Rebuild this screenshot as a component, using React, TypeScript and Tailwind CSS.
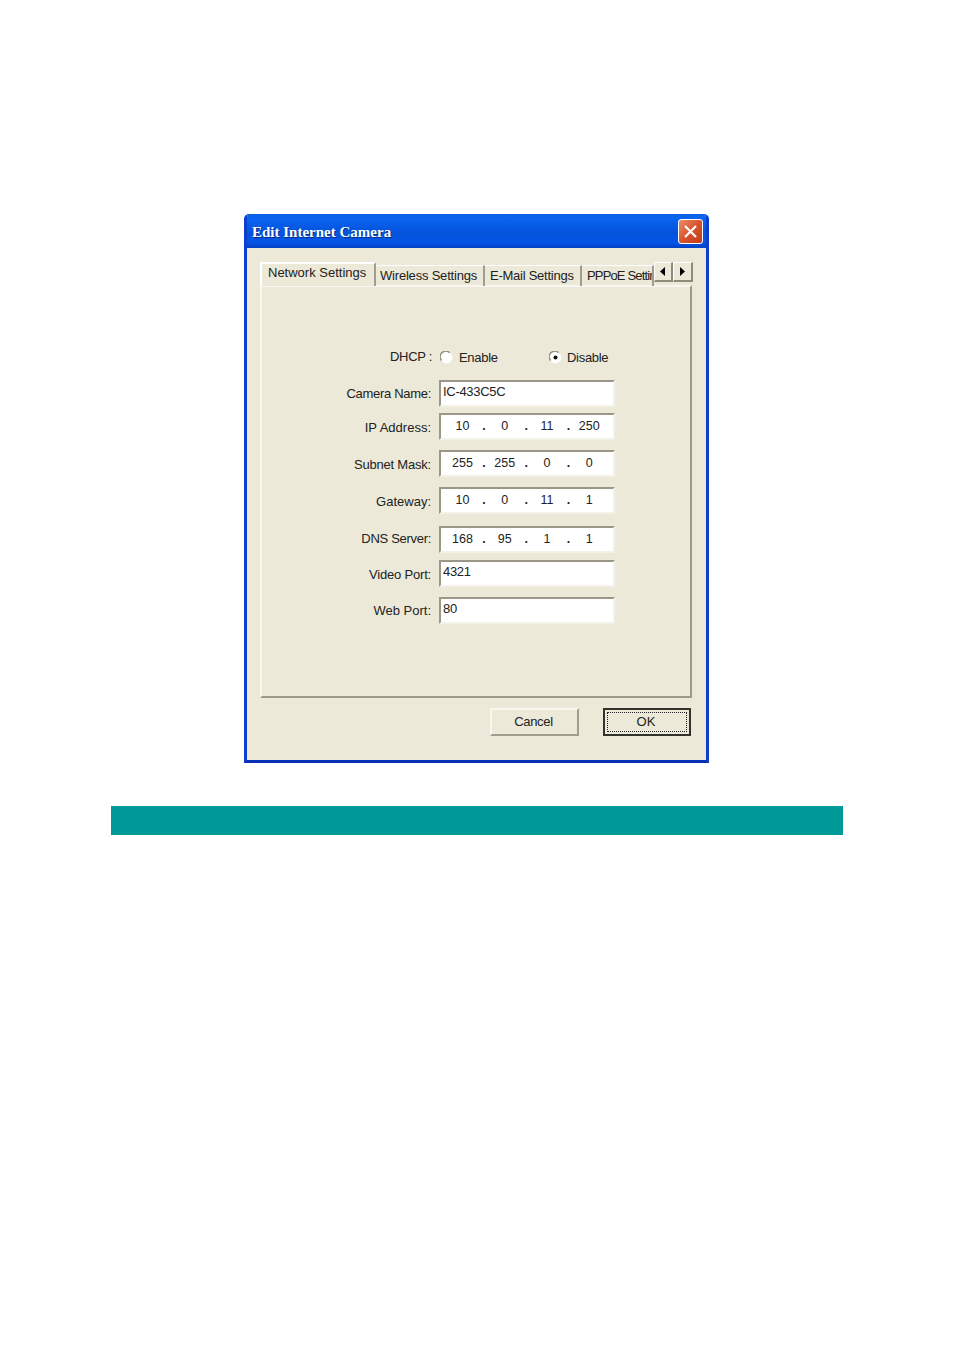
import type { ReactNode } from "react";

function Field({ label, children, className, labelClass }: { label: string; children: ReactNode; className: string; labelClass: string }) {
  return (
    <div className={`flex items-start ${className}`}>
      <span className={`w-[170px] pr-px text-right text-[13px] leading-[16px] text-[#222] ${labelClass}`}>{label}</span>
      <div className="ml-[7px] h-[27px] w-[176px] border-2 border-[#f3f1e8] border-t-[#9a9788] border-l-[#9a9788] bg-white">
        {children}
      </div>
    </div>
  );
}

function TextValue({ value }: { value: string }) {
  return <div className="pl-[2px] text-[13px] leading-[20px] tracking-[-0.3px] text-[#222]">{value}</div>;
}

function IpValue({ parts }: { parts: string[] }) {
  return (
    <div className="flex pl-[3px] text-[12.5px] leading-[22px] text-[#222]">
      {parts.map((p, i) => (
        <div key={i} className="flex w-[42.3px]">
          <span className="w-[37px] text-center">{p}</span>
          {i < 3 ? <span className="ml-px w-[4px] text-center font-bold">.</span> : null}
        </div>
      ))}
    </div>
  );
}

function Radio({ checked }: { checked?: boolean }) {
  return (
    <svg width="13" height="13" viewBox="0 0 13 13" className="block">
      <circle cx="6.5" cy="6.5" r="5.5" fill="#fff" stroke="#fff" />
      <path d="M1.6 9.5A5.6 5.6 0 0 1 9.5 1.6" fill="none" stroke="#8f8d80" strokeWidth="1.4" />
      {checked ? <circle cx="6.5" cy="6.5" r="2" fill="#111" /> : null}
    </svg>
  );
}

function Tab({ label, className }: { label: string; className: string }) {
  return (
    <div className={`h-[21px] shrink-0 overflow-hidden whitespace-nowrap border-t border-r-2 border-t-white border-r-[#a09d8e] pt-px text-[13px] leading-[17px] text-[#222] ${className}`}>
      {label}
    </div>
  );
}

export default function App() {
  return (
    <div className="flex h-[1350px] w-[954px] flex-col items-center bg-white pt-[214px] font-['Liberation_Sans',sans-serif]">
      <div className="mr-px h-[549px] w-[465px] overflow-hidden rounded-t-[5px] border-x-[3px] border-b-[3px] border-x-[#0a3fd0] border-b-[#0831b8] bg-[#ece9d8]">
        {/* title bar */}
        <div className="-mx-[3px] flex h-[34px] items-center justify-between bg-[linear-gradient(180deg,#0a5fe6_0%,#0a64f0_12%,#0453dc_55%,#0354e6_85%,#0340c0_100%)] pl-[8px] pr-[6px]">
          <span className="pt-[2px] font-['Liberation_Serif',serif] text-[15px] font-bold text-white [text-shadow:1px_1px_0_#0a2a80]">
            Edit Internet Camera
          </span>
          <div className="mt-px flex h-[25px] w-[25px] items-center justify-center rounded-[3px] border border-white bg-[linear-gradient(135deg,#e8906f,#d8532c_50%,#c23c18)]">
            <svg width="15" height="15" viewBox="0 0 15 15">
              <path d="M2 2l11 11M13 2L2 13" stroke="#fff" strokeWidth="2.2" />
            </svg>
          </div>
        </div>

        {/* tabs and panel */}
        <div className="relative mx-[13px] mt-[14px]">
          <div className="relative z-10 flex h-[24px] items-end overflow-hidden">
            <div className="h-[24px] w-[116px] shrink-0 rounded-t-[2px] border-x-2 border-t-2 border-l-white border-t-white border-r-[#a09d8e] bg-[#ece9d8] pl-[6px] text-[13px] leading-[18px] text-[#222]">
              Network Settings
            </div>
            <Tab label="Wireless Settings" className="w-[109px] pl-[4px] tracking-[-0.2px]" />
            <Tab label="E-Mail Settings" className="w-[97px] pl-[5px] tracking-[-0.25px]" />
            <Tab label="PPPoE Settings" className="w-[72px] border-r-0 pl-[5px] tracking-[-0.85px]" />
          </div>
          <div className="absolute right-0 top-0 z-20 flex h-[20px]">
            <div className="flex w-[19px] items-center justify-center border-r-2 border-b-2 border-r-[#8f8c7e] border-b-[#8f8c7e] border-t border-l border-t-white border-l-white bg-[#ece9d8]">
              <svg width="6" height="9" viewBox="0 0 6 9"><path d="M5 0v9L0 4.5z" fill="#000" /></svg>
            </div>
            <div className="flex w-[20px] items-center justify-center border-r-2 border-b-2 border-r-[#8f8c7e] border-b-[#8f8c7e] border-t border-l border-t-white border-l-white bg-[#ece9d8]">
              <svg width="6" height="9" viewBox="0 0 6 9"><path d="M0 0v9l5-4.5z" fill="#000" /></svg>
            </div>
          </div>

          <div className="-mt-px h-[413px] w-[432px] border-2 border-[#9d9a8b] border-l-[#f8f7f1] border-t-[#f8f7f1] pt-[60px]">
            <div className="flex h-[20px] items-center text-[13px] tracking-[-0.3px] text-[#222]">
              <span className="w-[170px] text-right">DHCP :</span>
              <div className="ml-[8px]"><Radio /></div>
              <span className="ml-[6px] w-[90px] pt-[2px]">Enable</span>
              <Radio checked />
              <span className="ml-[5px] pt-[2px]">Disable</span>
            </div>
            <Field label="Camera Name:" labelClass="pt-[6px] tracking-[-0.3px]" className="mt-[13px]"><TextValue value="IC-433C5C" /></Field>
            <Field label="IP Address:" labelClass="pt-[7px]" className="mt-[6px]"><IpValue parts={["10", "0", "11", "250"]} /></Field>
            <Field label="Subnet Mask:" labelClass="pt-[7px] tracking-[-0.2px]" className="mt-[10px]"><IpValue parts={["255", "255", "0", "0"]} /></Field>
            <Field label="Gateway:" labelClass="pt-[7px]" className="mt-[10px]"><IpValue parts={["10", "0", "11", "1"]} /></Field>
            <Field label="DNS Server:" labelClass="pt-[5px] tracking-[-0.3px]" className="mt-[12px]"><IpValue parts={["168", "95", "1", "1"]} /></Field>
            <Field label="Video Port:" labelClass="pt-[7px] tracking-[-0.2px]" className="mt-[7px]"><TextValue value="4321" /></Field>
            <Field label="Web Port:" labelClass="pt-[6px]" className="mt-[10px]"><TextValue value="80" /></Field>
          </div>
        </div>

        {/* buttons */}
        <div className="mt-[10px] flex justify-end gap-[24px] pr-[15px]">
          <button className="h-[28px] w-[89px] border-2 border-[#a09d8e] border-l-[#f8f7f1] border-t-[#f8f7f1] pr-[2px] text-[13px] tracking-[-0.3px] text-[#222]">
            Cancel
          </button>
          <button className="h-[28px] w-[88px] border-2 border-[#33332d] bg-[#ece9d8] p-[2px] text-[13px] text-[#222]">
            <div className="flex h-full items-center justify-center border border-dotted border-[#222] pr-[2px]">OK</div>
          </button>
        </div>
      </div>

      <div className="mt-[43px] h-[29px] w-[732px] bg-[#009b98]" />
    </div>
  );
}
